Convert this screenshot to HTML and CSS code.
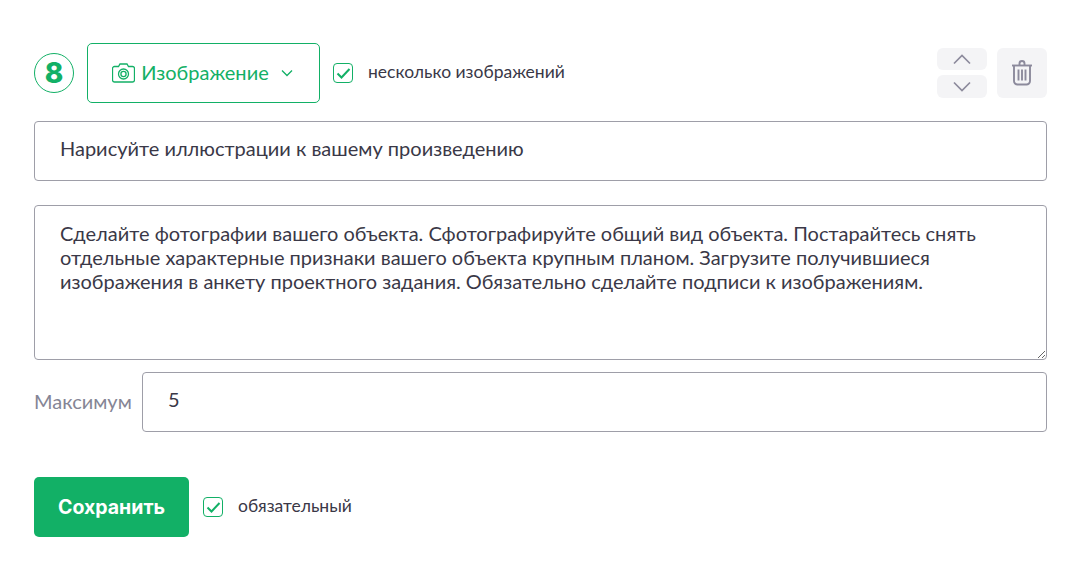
FILE: index.html
```html
<!DOCTYPE html>
<html lang="ru">
<head>
<meta charset="utf-8">
<title>Вопрос</title>
<link rel="stylesheet" href="styles.css">
</head>
<body>
<form class="form">
  <div class="top">
    <div class="num">8</div>
    <button type="button" class="type">
      <svg class="cam" width="23" height="20" viewBox="0 0 23 20" fill="none" stroke="#12b066" stroke-width="1.300"><path d="M2.500 3.500h4L8 1h7l1.500 2.500h4a2 2 0 0 1 2 2v11.500a2 2 0 0 1-2 2h-18a2 2 0 0 1-2-2V5.500a2 2 0 0 1 2-2z"/><circle cx="11.500" cy="11" r="5"/><circle cx="11.500" cy="11" r="2.600"/></svg>
      <span>Изображение</span>
      <svg class="chev" width="12" height="8" viewBox="0 0 12 8" fill="none" stroke="#12b066" stroke-width="1.300"><path d="M1 1.500l5 5 5-5"/></svg>
    </button>
    <label class="check">
      <span class="box"><svg width="15" height="13" viewBox="0 0 15 13" fill="none" stroke="#12b066" stroke-width="2"><path d="M1.500 6.500l4 4L13.500 2"/></svg></span>
      <span class="check-text">несколько изображений</span>
    </label>
    <div class="actions">
      <div class="arrows">
        <button type="button" class="arrow"><svg width="18" height="11" viewBox="0 0 18 11" fill="none" stroke="#8c8a9c" stroke-width="1.700"><path d="M1 9.500l8-8 8 8"/></svg></button>
        <button type="button" class="arrow"><svg width="18" height="11" viewBox="0 0 18 11" fill="none" stroke="#8c8a9c" stroke-width="1.700"><path d="M1 1.500l8 8 8-8"/></svg></button>
      </div>
      <button type="button" class="trash"><svg width="22" height="26" viewBox="0 0 22 26" fill="none" stroke="#8c8a9c" stroke-width="1.900"><path d="M1 5.500h20"/><path d="M8.500 5V3.500a2.500 2.500 0 0 1 5 0V5"/><path d="M3 6v15a3.500 3.500 0 0 0 3.500 3.500h9A3.500 3.500 0 0 0 19 21V6"/><path d="M7.500 9.500v11M11 9.500v11M14.500 9.500v11"/></svg></button>
    </div>
  </div>
  <input class="field title" type="text" value="Нарисуйте иллюстрации к вашему произведению">
  <textarea class="field area">Сделайте фотографии вашего объекта. Сфотографируйте общий вид объекта. Постарайтесь снять отдельные характерные признаки вашего объекта крупным планом. Загрузите получившиеся изображения в анкету проектного задания. Обязательно сделайте подписи к изображениям.</textarea>
  <div class="max">
    <span class="max-label">Максимум</span>
    <input class="field max-input" type="text" value="5">
  </div>
  <div class="bottom">
    <button type="button" class="save">Сохранить</button>
    <label class="check">
      <span class="box"><svg width="15" height="13" viewBox="0 0 15 13" fill="none" stroke="#12b066" stroke-width="2"><path d="M1.500 6.500l4 4L13.500 2"/></svg></span>
      <span class="check-text">обязательный</span>
    </label>
  </div>
</form>
</body>
</html>
```

FILE: styles.css
```css
* { box-sizing: border-box; }
html, body { margin: 0; background: #fff; }
body { font-family: "Lato", "Noto Sans", sans-serif; color: #3a3847; }
.form { width: 1013px; margin-left: 34px; padding-top: 43px; display: flex; flex-direction: column; }
button { font-family: inherit; cursor: pointer; }
.top { display: flex; align-items: center; height: 60px; }
.num { width: 40px; height: 40px; border: 1px solid #12b066; border-radius: 50%; color: #12b066; font-family: "Inter", sans-serif; font-size: 28px; font-weight: 800; display: flex; align-items: center; justify-content: center; line-height: 1; }
.type { margin-left: 13px; width: 233px; height: 60px; background: #fff; border: 1px solid #12b066; border-radius: 5px; color: #12b066; font-size: 20px; display: flex; align-items: center; justify-content: center; padding: 0 2px 3px 0; }
.cam { margin-right: 6px; margin-top: 3px; }
.chev { margin-left: 12px; margin-top: 3px; }
.check { display: flex; align-items: center; font-size: 17.5px; }
.top .check { margin-left: 13px; }
.box { width: 20px; height: 20px; border: 1px solid #12b066; border-radius: 4px; display: flex; align-items: center; justify-content: center; margin-right: 15px; background: #fff; }
.check-text { line-height: 20px; margin-top: -3px; }
.actions { margin-left: auto; display: flex; gap: 10px; }
.arrows { display: flex; flex-direction: column; gap: 5px; }
.arrow { width: 50px; height: 22px; background: #f4f4f6; border: 0; border-radius: 6px; padding: 0; display: flex; align-items: center; justify-content: center; }
.arrow + .arrow { height: 23px; }
.trash { width: 50px; height: 50px; background: #f4f4f6; border: 0; border-radius: 6px; padding: 0; display: flex; align-items: center; justify-content: center; }
.field { display: block; width: 100%; border: 1px solid #9e9ea8; border-radius: 4px; font-family: inherit; font-size: 20px; color: #3a3847; background: #fff; outline: none; }
.title { height: 60px; margin-top: 18px; padding: 0 25px 6px; }
.area { height: 155px; margin-top: 24px; padding: 15px 25px; line-height: 24px; resize: vertical; }
.max { display: flex; align-items: center; margin-top: 12px; }
.max-label { width: 108px; font-size: 20px; color: #858595; padding-bottom: 2px; }
.max-input { flex: 1; width: auto; height: 60px; padding: 0 25px 6px; }
.bottom { display: flex; align-items: center; margin-top: 45px; }
.save { width: 155px; height: 60px; background: #12b066; border: 0; border-radius: 5px; color: #fff; font-family: "Inter", sans-serif; font-size: 19.5px; font-weight: 700; padding: 0; }
.bottom .check { margin-left: 14px; }
```
